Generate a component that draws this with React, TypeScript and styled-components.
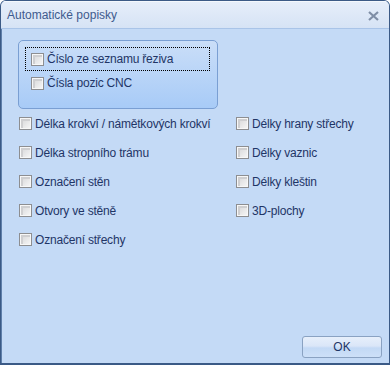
import React from "react";
import styled, { createGlobalStyle } from "styled-components";

const Global = createGlobalStyle`
  html, body { margin: 0; padding: 0; background: #ffffff; }
  body { font-family: "Liberation Sans", Arial, sans-serif; }
`;

const Window = styled.div`
  box-sizing: border-box;
  width: 390px;
  height: 365px;
  border: 1px solid #3b5a86;
  border-bottom-width: 2px;
  border-radius: 6px 6px 0 0;
  background: #c4daf6;
  display: flex;
  flex-direction: column;
  overflow: hidden;
  box-shadow: inset 1px 0 0 #5f7faa;
`;

const TitleBar = styled.div`
  height: 27px;
  flex: 0 0 27px;
  display: flex;
  align-items: center;
  justify-content: space-between;
  padding: 0 10px 0 6px;
  background: linear-gradient(#e6eefa, #d6e3f5);
  border-bottom: 1px solid #a9c4e8;
  box-shadow: inset 0 1px 0 #f4f8fd;
`;

const Title = styled.span`
  font-size: 12px;
  color: #3e5b8e;
  padding-top: 1px;
`;

const CloseIcon = styled.svg`
  width: 11px;
  height: 10px;
  margin-top: 2px;
`;

const Body = styled.div`
  flex: 1;
  display: flex;
  flex-direction: column;
  padding: 11px 7px 5px 17px;
`;

const GroupBox = styled.div`
  box-sizing: border-box;
  width: 200px;
  height: 69px;
  border: 1px solid #7a9fd3;
  border-radius: 5px;
  background: linear-gradient(#cadef8, #a8cbf7);
  padding: 6px 0 0 6px;
  display: flex;
  flex-direction: column;
`;

const GroupItem = styled.div<{ $focused?: boolean }>`
  box-sizing: border-box;
  width: 185px;
  height: 24px;
  display: flex;
  align-items: center;
  gap: 3px;
  padding-left: 5px;
  border: 1px dotted ${(p) => (p.$focused ? "#000000" : "transparent")};
`;

const Grid = styled.div`
  display: grid;
  grid-template-columns: 217px 1fr;
  margin-top: 0;
`;

const Column = styled.div`
  display: grid;
  grid-auto-rows: 29px;
`;

const Item = styled.div`
  display: flex;
  align-items: center;
  gap: 3px;
  margin-left: 1px;
`;

const Box = styled.span`
  box-sizing: border-box;
  width: 13px;
  height: 13px;
  flex: 0 0 13px;
  border: 1px solid #8d8e91;
  box-shadow: inset 0 0 0 1px #f7f7f7, inset 2px 2px 0 1px #cfcfd1;
  background-image: linear-gradient(135deg, #d3d3d5, #f8f8f8);
`;

const Label = styled.span`
  font-size: 12px;
  color: #1f3566;
  white-space: nowrap;
  letter-spacing: -0.2px;
`;

const Footer = styled.div`
  margin-top: auto;
  display: flex;
  justify-content: flex-end;
`;

const Button = styled.button`
  box-sizing: border-box;
  width: 80px;
  height: 22px;
  border: 1px solid #8aa2c2;
  border-radius: 3px;
  background: linear-gradient(#e7effb 0%, #dae6f8 45%, #c3d9f5 55%, #cde0f8 100%);
  font-family: "Liberation Sans", Arial, sans-serif;
  font-size: 12px;
  color: #1f3566;
  padding: 0;
`;

const Check = ({ label }: { label: string }) => (
  <Item>
    <Box />
    <Label>{label}</Label>
  </Item>
);

export default function App() {
  const left = [
    "Délka krokví / námětkových krokví",
    "Délka stropního trámu",
    "Označení stěn",
    "Otvory ve stěně",
    "Označení střechy",
  ];
  const right = ["Délky hrany střechy", "Délky vaznic", "Délky kleštin", "3D-plochy"];
  return (
    <>
      <Global />
      <Window>
        <TitleBar>
          <Title>Automatické popisky</Title>
          <CloseIcon viewBox="0 0 11 10">
            <path d="M1 1 L10 9 M10 1 L1 9" stroke="#7f8ea6" strokeWidth="2.2" fill="none" />
          </CloseIcon>
        </TitleBar>
        <Body>
          <GroupBox>
            <GroupItem $focused>
              <Box />
              <Label>Číslo ze seznamu řeziva</Label>
            </GroupItem>
            <GroupItem>
              <Box />
              <Label>Čísla pozic CNC</Label>
            </GroupItem>
          </GroupBox>
          <Grid>
            <Column>
              {left.map((l) => (
                <Check key={l} label={l} />
              ))}
            </Column>
            <Column>
              {right.map((l) => (
                <Check key={l} label={l} />
              ))}
            </Column>
          </Grid>
          <Footer>
            <Button>OK</Button>
          </Footer>
        </Body>
      </Window>
    </>
  );
}
